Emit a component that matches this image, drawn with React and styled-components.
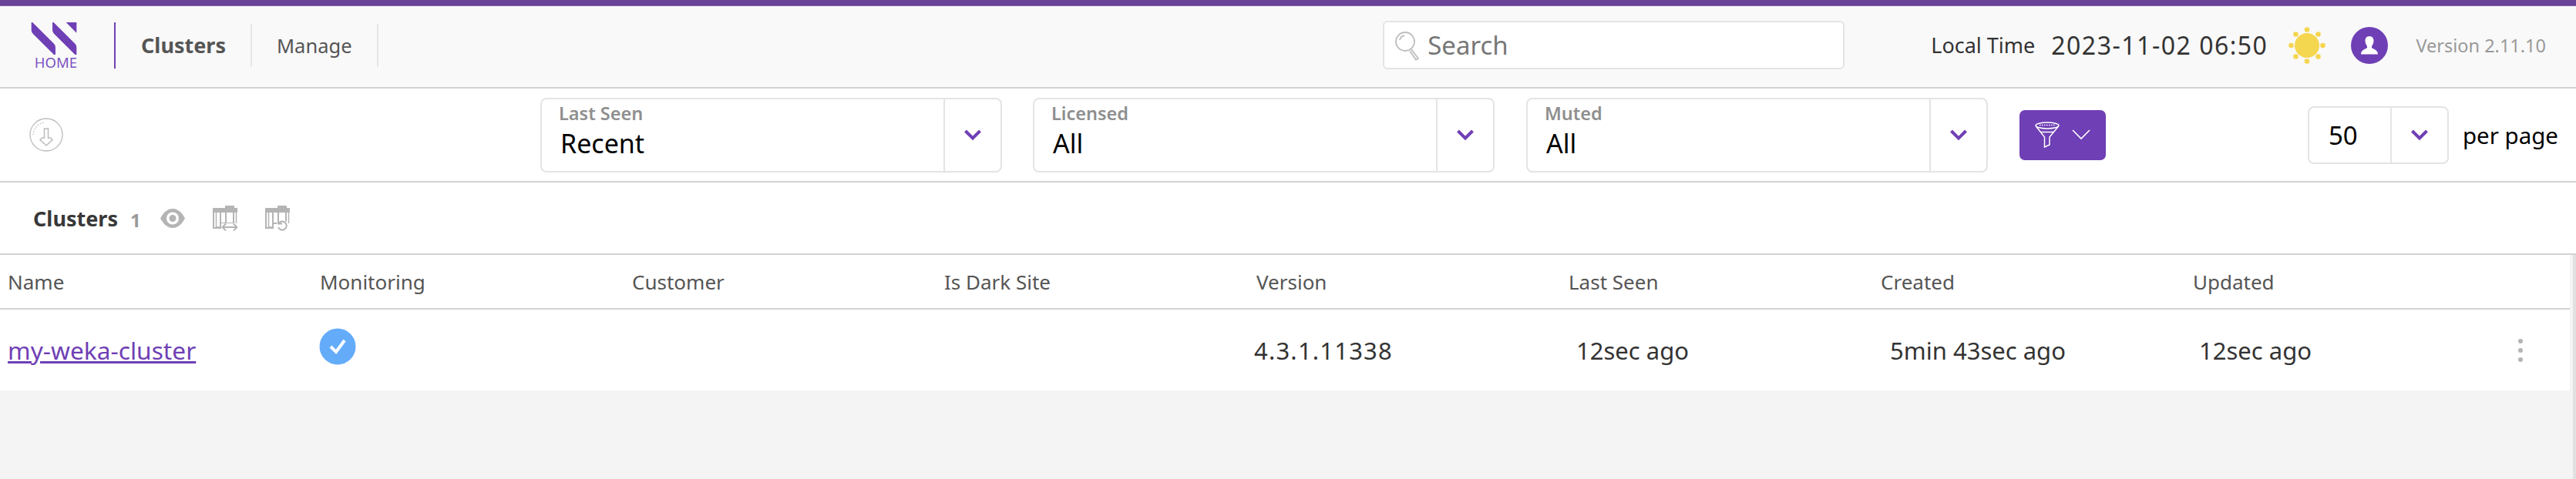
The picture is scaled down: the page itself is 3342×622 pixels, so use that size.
import React from "react";
import styled, { createGlobalStyle } from "styled-components";

const Global = createGlobalStyle`
  html, body { margin: 0; padding: 0; background: #f4f4f4; }
  body { font-family: "Noto Sans", "Open Sans", sans-serif; overflow: hidden; }
  * { box-sizing: border-box; }
`;

const purple = "#6f3fb5";

const Page = styled.div`
  width: 3342px;
  height: 622px;
  background: #f4f4f4;
`;
const TopStrip = styled.div`
  height: 8px;
  background: #6a4499;
  border-bottom: 1px solid #8460ab;
`;
const Header = styled.header`
  height: 107px;
  background: #f9f9f9;
  border-bottom: 2px solid #d3d3d3;
  display: flex;
  align-items: center;
  padding: 0 39px 4px 40px;
`;
const LogoBlock = styled.div`
  width: 60px;
  height: 60px;
  display: flex;
  flex-direction: column;
  align-items: flex-end;
`;
const HomeText = styled.span`
  font-size: 18.500px;
  line-height: 17px;
  color: #7d52c2;
`;
const BrandRule = styled.div`
  width: 2px;
  height: 60px;
  margin: 0 33px 0 48px;
  background: ${purple};
`;
const NavItem = styled.div`
  height: 56px;
  padding-right: ${(p) => p.$pr}px;
  margin-right: ${(p) => p.$mr}px;
  display: flex;
  align-items: center;
  font-size: ${(p) => (p.$active ? 27 : 25.500)}px;
  font-weight: ${(p) => (p.$active ? 700 : 400)};
  color: #555;
  border-right: 2px solid #e6e6e6;
`;
const Spacer = styled.div`
  flex: 1;
`;
const SearchBox = styled.div`
  width: 599px;
  height: 63px;
  background: #fff;
  border: 2px solid #e4e4e4;
  border-radius: 6px;
  display: flex;
  align-items: center;
  padding-left: 13px;
  gap: 9px;
  font-size: 33px;
  color: #777;
`;
const LocalLabel = styled.span`
  margin: 0 21px 0 112px;
  font-size: 27px;
  color: #333;
`;
const DateText = styled.span`
  font-size: 32px;
  letter-spacing: 1.500px;
  color: #333;
`;
const IconSlot = styled.div`
  margin-left: ${(p) => p.$ml}px;
  display: flex;
`;
const VersionText = styled.span`
  margin-left: 36px;
  font-size: 23.500px;
  color: #999;
`;
const FilterBar = styled.div`
  height: 122px;
  background: #fff;
  border-bottom: 2px solid #d3d3d3;
  display: flex;
  align-items: center;
  padding: 0 23px 0 38px;
`;
const SelectBox = styled.div`
  width: 599px;
  height: 97px;
  margin-left: ${(p) => p.$ml}px;
  border: 2px solid #e4e4e4;
  border-radius: 8px;
  display: flex;
`;
const SelectBody = styled.div`
  flex: 1;
  padding: 3px 0 0 22px;
  display: flex;
  flex-direction: column;
`;
const SelectLabel = styled.span`
  font-size: 23.500px;
  line-height: 30px;
  font-weight: 600;
  color: #8f8f8f;
`;
const SelectValue = styled.span`
  font-size: 34px;
  line-height: 48px;
  color: #000;
  padding-left: 2px;
`;
const ChevronCell = styled.div`
  width: ${(p) => p.$w}px;
  border-left: 2px solid #e4e4e4;
  display: flex;
  align-items: center;
  justify-content: center;
`;
const FilterButton = styled.button`
  width: 112px;
  height: 65px;
  margin-left: 41px;
  padding: 0;
  border: 0;
  border-radius: 7px;
  background: ${purple};
  display: flex;
  align-items: center;
  justify-content: center;
  gap: 16px;
`;
const PageSelect = styled.div`
  width: 183px;
  height: 75px;
  border: 2px solid #e4e4e4;
  border-radius: 8px;
  display: flex;
`;
const PageValue = styled.div`
  flex: 1;
  padding-left: 25px;
  display: flex;
  align-items: center;
  font-size: 33px;
  color: #000;
`;
const PerPage = styled.span`
  margin-left: 18px;
  font-size: 29.500px;
  color: #000;
`;
const TitleBar = styled.div`
  height: 94px;
  background: #fff;
  border-bottom: 2px solid #d3d3d3;
  display: flex;
  align-items: center;
  padding-left: 43px;
`;
const Title = styled.span`
  font-size: 27px;
  font-weight: 700;
  color: #383838;
`;
const Count = styled.span`
  margin: 4px 0 0 16px;
  font-size: 24px;
  font-weight: 700;
  color: #999;
`;
const TitleIcon = styled.div`
  margin-left: ${(p) => p.$ml}px;
  display: flex;
`;
const TableArea = styled.div`
  display: flex;
  justify-content: space-between;
  align-items: stretch;
  height: 291px;
`;
const Table = styled.div`
  width: 3334px;
`;
const Scrollbar = styled.div`
  width: 4px;
  background: #e1e1e1;
`;
const TableRow = styled.div`
  height: ${(p) => p.$h}px;
  background: #fff;
  display: grid;
  grid-template-columns: repeat(8, 405px) 1fr;
  align-items: center;
  ${(p) => p.$line && "border-bottom: 2px solid #d3d3d3;"}
`;
const HeadCell = styled.div`
  padding-left: 10px;
  font-size: 26px;
  color: #555;
`;
const Cell = styled.div`
  padding-left: ${(p) => p.$pl || 0}px;
  font-size: 31px;
  letter-spacing: ${(p) => p.$ls || 0}px;
  color: #333;
`;
const ClusterLink = styled.a`
  padding-left: 10px;
  font-size: 31.700px;
  color: ${purple};
  text-decoration: underline;
`;
const Kebab = styled.div`
  padding-left: 26px;
  display: flex;
`;

const Chevron = () => (
  <svg width="24" height="16" viewBox="0 0 24 16" fill="none">
    <path d="M2.500 3 L12 12.500 L21.500 3" stroke={purple} strokeWidth="4" />
  </svg>
);

const Logo = () => (
  <svg width="60" height="44" viewBox="40 29 60 44" fill={purple}>
    <path d="M40 29h1.500L70 57.500q2 2 2 5V72h-2L42.500 44.500q-2.500-2.500-2.500-5z" />
    <path d="M68 29h1.500L98 57.500q2 2 2 5V72h-2L70.500 44.500q-2.500-2.500-2.500-5z" />
    <path d="M86 29h14v14z" />
  </svg>
);

const SearchIcon = () => (
  <svg width="34" height="40" viewBox="0 0 34 40" fill="none" stroke="#bdbdbd" strokeWidth="1.800">
    <circle cx="14" cy="15" r="12" />
    <path d="M7 13 a8 8 0 0 1 6 -6" />
    <path d="M22 25 L31 37 L28 38.500 L20 27" />
  </svg>
);

const Sun = () => (
  <svg width="48" height="48" viewBox="0 0 48 48" fill="#f5d64f">
    <circle cx="24" cy="24" r="16" />
    {[[24, 3.500], [24, 44.500], [3.500, 24], [44.500, 24], [9.500, 9.500], [38.500, 9.500], [9.500, 38.500], [38.500, 38.500]].map(([x, y]) => (
      <circle key={`${x}-${y}`} cx={x} cy={y} r="3.300" />
    ))}
  </svg>
);

const UserBadge = () => (
  <svg width="48" height="48" viewBox="0 0 48 48">
    <circle cx="24" cy="24" r="24" fill={purple} />
    <path d="M24 12c-4 0-5.500 3-5.500 6 0 3 1.500 5.500 2.500 7v2c-2 2-8 2.500-8 8.500h22c0-6-6-6.500-8-8.500v-2c1-1.500 2.500-4 2.500-7 0-3-1.500-6-5.500-6z" fill="#fff" />
  </svg>
);

const DownloadCircle = () => (
  <svg width="44" height="44" viewBox="0 0 44 44" fill="none" stroke="#bbb" strokeWidth="1.300">
    <circle cx="22" cy="22" r="21" />
    <path d="M5 22 a17 17 0 0 1 14 -16" strokeDasharray="1.500 2" />
    <path d="M19.500 14h5v12h3l2.500 2.500-8 7.500-8-7.500 2.500-2.500h3z" strokeWidth="1.500" />
  </svg>
);

const Funnel = () => (
  <svg width="32" height="34" viewBox="0 0 32 34" fill="none" stroke="#fff" strokeWidth="1.500">
    <ellipse cx="16" cy="5" rx="15" ry="4" />
    <path d="M6 4.500h20" strokeDasharray="1.500 1.500" />
    <path d="M1.500 6 L12.500 20 V33 L19 30 V20 L30.500 6" />
    <path d="M7.500 13.500h17" />
  </svg>
);

const WhiteChevron = () => (
  <svg width="24" height="14" viewBox="0 0 24 14" fill="none">
    <path d="M1 1 L12 12 L23 1" stroke="#fff" strokeWidth="1.600" />
  </svg>
);

const Eye = () => (
  <svg width="32" height="25" viewBox="0 0 32 25">
    <path d="M0 12.500C5 3 11 0 16 0s11 3 16 12.500C27 22 21 25 16 25S5 22 0 12.500z" fill="#b4b4b4" />
    <circle cx="16" cy="12.500" r="8" fill="#fff" />
    <circle cx="16" cy="12.500" r="4.500" fill="#b4b4b4" />
  </svg>
);

const ColumnsBase = () => (
  <g>
    <path d="M0 3h16V0h11q1 0 1 1v2h4v6H0z" fill="#b4b4b4" />
    <path d="M1 8v21h9V8M17 8v15h10V8M10 23h7" fill="none" stroke="#b4b4b4" strokeWidth="2" />
    <path d="M4.500 8v21M30.500 8v15M5 28h6" fill="none" stroke="#b4b4b4" strokeWidth="1.500" />
  </g>
);

const ColumnsResize = () => (
  <svg width="32" height="33" viewBox="0 0 32 33">
    <ColumnsBase />
    <path d="M11 28h21" fill="none" stroke="#fff" strokeWidth="10" />
    <path d="M17 32.500l-4.500-4.500 4.500-4.500M27 23.500l4.500 4.500-4.500 4.500M12 28h19" fill="none" stroke="#b4b4b4" strokeWidth="2" />
  </svg>
);

const ColumnsReset = () => (
  <svg width="32" height="33" viewBox="0 0 32 33">
    <ColumnsBase />
    <circle cx="22" cy="26" r="7.500" fill="#fff" />
    <path d="M18 22.500a5.500 5.500 0 1 1-1 5.500M17 19.500v4h5" fill="none" stroke="#b4b4b4" strokeWidth="2" />
  </svg>
);

const CheckBadge = () => (
  <svg width="48" height="48" viewBox="0 0 48 48">
    <circle cx="24" cy="24" r="23.500" fill="#64acfa" />
    <path d="M15 24l7 7 11-15" fill="none" stroke="#fff" strokeWidth="4" />
  </svg>
);

const Dots = () => (
  <svg width="8" height="32" viewBox="0 0 8 32" fill="#b4b4b4">
    <circle cx="4" cy="4" r="3" />
    <circle cx="4" cy="16" r="3" />
    <circle cx="4" cy="28" r="3" />
  </svg>
);

const filters = [
  { label: "Last Seen", value: "Recent", ml: 619 },
  { label: "Licensed", value: "All", ml: 40 },
  { label: "Muted", value: "All", ml: 41 },
];
const columns = ["Name", "Monitoring", "Customer", "Is Dark Site", "Version", "Last Seen", "Created", "Updated"];

export default function App() {
  return (
    <Page>
      <Global />
      <TopStrip />
      <Header>
        <LogoBlock>
          <Logo />
          <HomeText>HOME</HomeText>
        </LogoBlock>
        <BrandRule />
        <NavItem $active $pr={32} $mr={32}>Clusters</NavItem>
        <NavItem $pr={32} $mr={0}>Manage</NavItem>
        <Spacer />
        <SearchBox>
          <SearchIcon />
          Search
        </SearchBox>
        <LocalLabel>Local Time</LocalLabel>
        <DateText>2023-11-02 06:50</DateText>
        <IconSlot $ml={27}><Sun /></IconSlot>
        <IconSlot $ml={33}><UserBadge /></IconSlot>
        <VersionText>Version 2.11.10</VersionText>
      </Header>
      <FilterBar>
        <DownloadCircle />
        {filters.map((f) => (
          <SelectBox key={f.label} $ml={f.ml}>
            <SelectBody>
              <SelectLabel>{f.label}</SelectLabel>
              <SelectValue>{f.value}</SelectValue>
            </SelectBody>
            <ChevronCell $w={74}><Chevron /></ChevronCell>
          </SelectBox>
        ))}
        <FilterButton>
          <Funnel />
          <WhiteChevron />
        </FilterButton>
        <Spacer />
        <PageSelect>
          <PageValue>50</PageValue>
          <ChevronCell $w={74}><Chevron /></ChevronCell>
        </PageSelect>
        <PerPage>per page</PerPage>
      </FilterBar>
      <TitleBar>
        <Title>Clusters</Title>
        <Count>1</Count>
        <TitleIcon $ml={25}><Eye /></TitleIcon>
        <TitleIcon $ml={36}><ColumnsResize /></TitleIcon>
        <TitleIcon $ml={36}><ColumnsReset /></TitleIcon>
      </TitleBar>
      <TableArea>
        <Table>
          <TableRow $h={71} $line>
            {columns.map((c) => <HeadCell key={c}>{c}</HeadCell>)}
          </TableRow>
          <TableRow $h={105}>
            <ClusterLink href="#">my-weka-cluster</ClusterLink>
            <Cell $pl={9}><CheckBadge /></Cell>
            <Cell />
            <Cell />
            <Cell $pl={7} $ls={1.200}>4.3.1.11338</Cell>
            <Cell $pl={20}>12sec ago</Cell>
            <Cell $pl={22}>5min 43sec ago</Cell>
            <Cell $pl={18}>12sec ago</Cell>
            <Kebab><Dots /></Kebab>
          </TableRow>
        </Table>
        <Scrollbar />
      </TableArea>
    </Page>
  );
}
